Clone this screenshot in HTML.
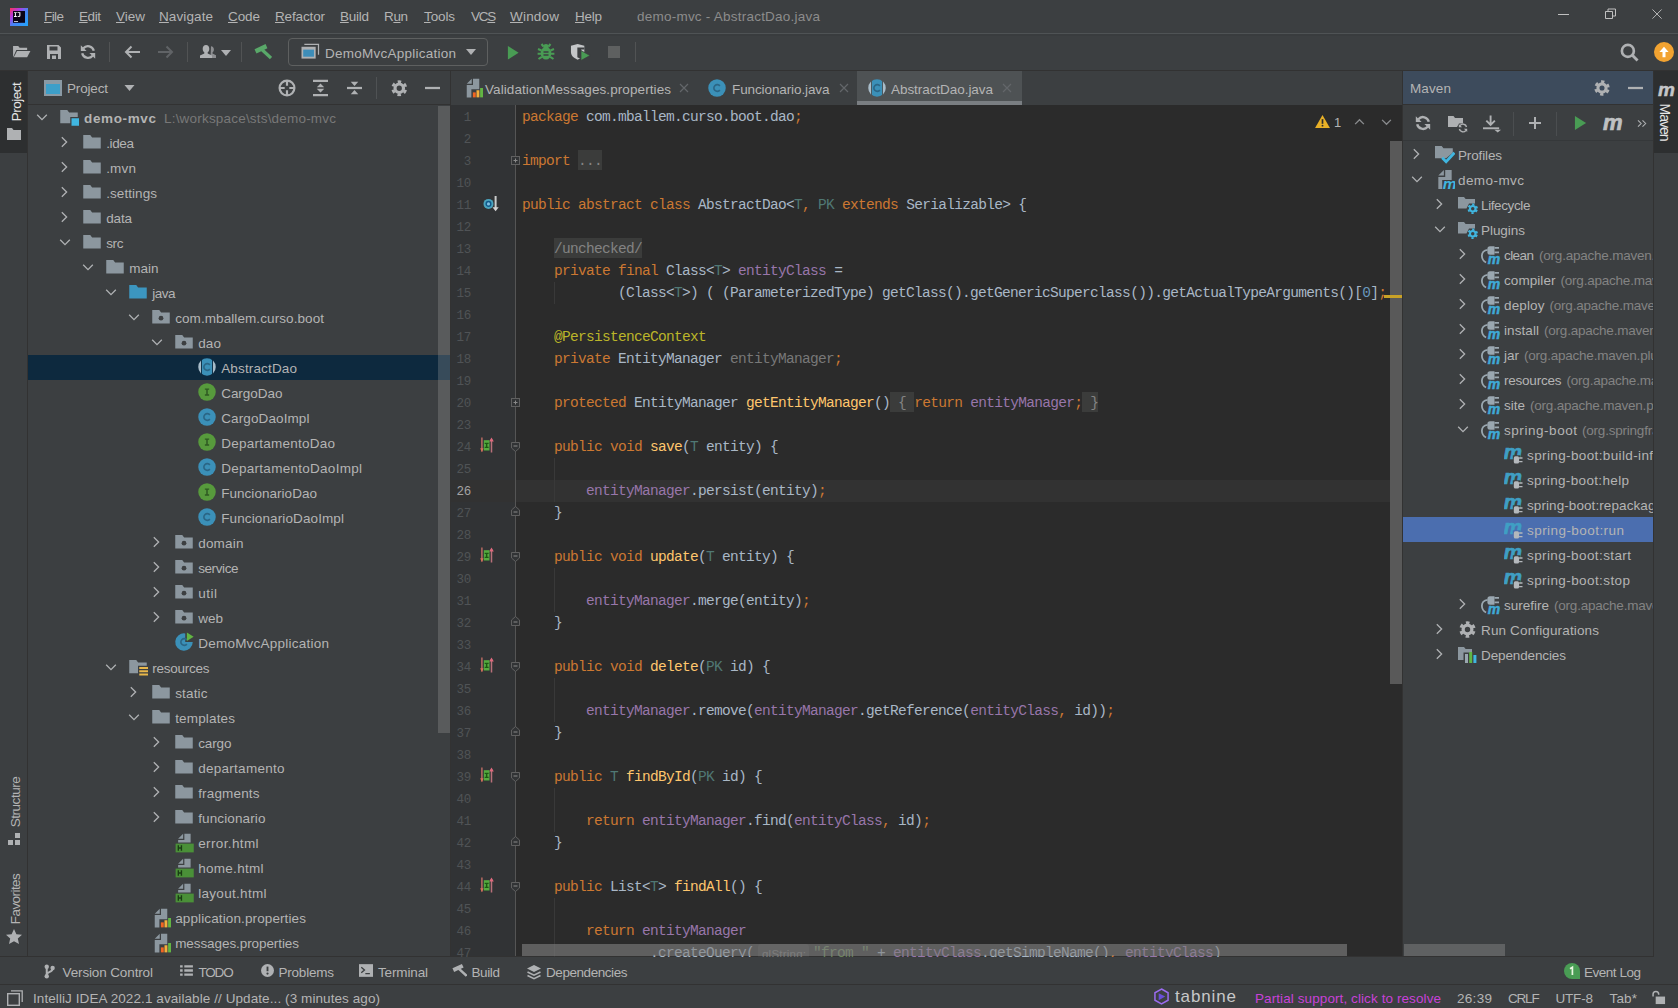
<!DOCTYPE html>
<html><head><meta charset="utf-8"><title>demo-mvc - AbstractDao.java</title>
<style>
html,body{margin:0;padding:0;background:#3c3f41;}
html{width:1678px;height:1008px;overflow:hidden;}
body{width:1678px;height:1008px;position:relative;overflow:hidden;font-family:"Liberation Sans",sans-serif;font-size:13.500px;color:#b4b4b4;}
#r{position:absolute;left:0;top:0;width:1678px;height:1008px;overflow:hidden;contain:strict;}
#r>div,#r>span,#r>svg,#r>pre{position:absolute;margin:0;}
#r>span{white-space:pre;}
pre{font-family:"Liberation Mono",monospace;font-size:14.500px;letter-spacing:-0.700px;color:#a9b7c6;height:22px;line-height:22px;white-space:pre;}
.k{color:#cc7832}.m{color:#ffc66d}.f{color:#9876aa}.a{color:#bbb529}.t{color:#507874}.n{color:#6897bb}.s{color:#6a8759}.g{color:#787878}
.fb{background:#3b3c3b;color:#838383;padding:3px 0 1px 0;}
.ln{font-size:12.500px;letter-spacing:-0.100px;color:#505356;}
.hint{background:#3b3b3b;color:#787878;font-family:"Liberation Sans";font-size:11.500px;letter-spacing:0;border-radius:3px;padding:1px 3px;}
u{text-decoration:underline;text-underline-offset:0.500px;text-decoration-thickness:1px;}
</style></head><body>
<svg width="0" height="0" style="position:absolute"><defs>

<symbol id="fold" viewBox="0 0 16 16"><path d="M1 13.2V2.4h5.6l1.5 2H15v8.8z" fill="#9aa7b0" opacity=".85"/></symbol>
<symbol id="fsrc" viewBox="0 0 16 16"><path d="M1 13.2V2.4h5.6l1.5 2H15v8.8z" fill="#3c96c0"/></symbol>
<symbol id="fpkg" viewBox="0 0 16 16"><path d="M1 13.2V2.4h5.6l1.5 2H15v8.8z" fill="#9aa7b0" opacity=".85"/><circle cx="8" cy="8.9" r="1.9" fill="#3c3f41"/></symbol>
<symbol id="fres" viewBox="0 0 16 16"><path d="M1 13V2.4h5.6l1.5 2H15V7H8v6z" fill="#9aa7b0" opacity=".85"/><path d="M9 8h7v1.6H9zM9 10.6h7v1.6H9zM9 13.2h7v1.6H9z" fill="#e8b74a"/></symbol>
<symbol id="fmod" viewBox="0 0 16 16"><path d="M1 13V2.4h5.6l1.5 2H15V8H9v5z" fill="#9aa7b0" opacity=".85"/><rect x="10" y="9" width="6" height="6" fill="#40b6e0"/></symbol>
<symbol id="cls" viewBox="0 0 16 16"><circle cx="8" cy="8" r="7" fill="#3b90b8"/><path d="M10.300 9.700A2.700 2.700 0 1 1 10.300 6.300" fill="none" stroke="#2b6686" stroke-width="1.300"/></symbol>
<symbol id="acls" viewBox="0 0 16 16"><clipPath id="cpm"><rect x="3.900" y="0" width="8.200" height="16"/></clipPath><clipPath id="cps"><path d="M0 0h3.200v16H0zM12.800 0H16v16h-3.200z"/></clipPath><circle cx="8" cy="8" r="7" fill="#3b90b8" clip-path="url(#cpm)"/><circle cx="8" cy="8" r="7" fill="#a8bcc9" clip-path="url(#cps)"/><path d="M10.300 9.700A2.700 2.700 0 1 1 10.300 6.300" fill="none" stroke="#2b6686" stroke-width="1.300"/></symbol>
<symbol id="intf" viewBox="0 0 16 16"><circle cx="8" cy="8" r="7" fill="#579a3c"/><path d="M6.300 5.100h3.400v1.100H8.600v3.600h1.100v1.100H6.300V9.800h1.100V6.200H6.300z" fill="#2f5a22"/></symbol>
<symbol id="app" viewBox="0 0 16 16"><path d="M9 1.100A7 7 0 1 0 15 8H9z" fill="#3b90b8"/><path d="M10.300 9.700A2.700 2.700 0 1 1 10.300 6.300" fill="none" stroke="#2b6686" stroke-width="1.300"/><path d="M10.300.300l5.400 3.400-5.400 3.500z" fill="#62b543"/></symbol>
<symbol id="html" viewBox="0 0 16 16"><path d="M7.300 .5L3.300 4.500h4z" fill="#9aa7b0" opacity=".85"/><path d="M8.300 .5v5h-5v2h10V.5z" fill="#9aa7b0" opacity=".85"/><rect x="1.300" y="8.500" width="14.500" height="7" fill="#4a9038"/><path d="M2.900 9.800h1.100v1.600h1.400V9.800h1.100v4.400H5.400v-1.700H4v1.700H2.900z" fill="#1a3d14"/></symbol>
<symbol id="prop" viewBox="0 0 16 16"><path d="M7 .5L3 4.500h4z" fill="#9aa7b0" opacity=".85"/><path d="M8 .5v5H3v10h3.700V9H13V.5z" fill="#9aa7b0" opacity=".85"/><rect x="7.900" y="11.500" width="2.300" height="4" fill="#f26522"/><rect x="10.800" y="9.800" width="2.300" height="5.700" fill="#f4af3d"/><rect x="13.700" y="8" width="2.300" height="7.500" fill="#62b543"/></symbol>
<symbol id="chr" viewBox="0 0 16 16"><path d="M5.500 2.500L11 8l-5.500 5.500" fill="none" stroke="#afb1b3" stroke-width="1.500"/></symbol>
<symbol id="chd" viewBox="0 0 16 16"><path d="M2.500 5.500L8 11l5.500-5.500" fill="none" stroke="#afb1b3" stroke-width="1.500"/></symbol>

<symbol id="logo" viewBox="0 0 18 18"><defs><linearGradient id="lg1" x1="0" y1="0" x2="1" y2="1"><stop offset="0" stop-color="#ff3355"/><stop offset=".28" stop-color="#b53be0"/><stop offset=".52" stop-color="#4a82f6"/><stop offset="1" stop-color="#1fa6fb"/></linearGradient></defs><rect width="18" height="18" fill="url(#lg1)"/><rect x="3" y="3" width="12" height="11.800" fill="#0a0418"/><path d="M4 4.200h2.800v.9H5.900v3h.9V9H4v-.9h.9v-3H4zM7.500 4.200h2.900v3.500q0 1.400-1.500 1.400-.9 0-1.500-.6l.6-.7q.4.400.8.400.5 0 .5-.5V5.100H7.500zM4 12.900h4v.9H4z" fill="#fff"/></symbol>

<symbol id="open" viewBox="0 0 20 16"><path d="M1 14V2h5.500l1.500 2H16v2.500H4.500L1 14z" fill="#afb1b3"/><path d="M5.200 7.500H19.500L16 14H1.800z" fill="#afb1b3"/></symbol>
<symbol id="save" viewBox="0 0 16 16"><path d="M1 1h11.500L15 3.500V15H1zM3.500 2.500v4h8v-4zM4 10v5h2V11.500h4V15h2v-5z" fill="#afb1b3" fill-rule="evenodd"/></symbol>
<symbol id="sync" viewBox="0 0 16 16"><path d="M13.800 6.800A6 6 0 0 0 3.400 4.200" fill="none" stroke="#afb1b3" stroke-width="2.300"/><path d="M.8 1.200v5.800h5.800z" fill="#afb1b3"/><path d="M2.200 9.200a6 6 0 0 0 10.400 2.600" fill="none" stroke="#afb1b3" stroke-width="2.300"/><path d="M15.200 14.800V9H9.400z" fill="#afb1b3"/></symbol>
<symbol id="back" viewBox="0 0 18 16"><path d="M17 8H3M8.500 2.500L3 8l5.500 5.500" fill="none" stroke="#afb1b3" stroke-width="2"/></symbol>
<symbol id="fwd" viewBox="0 0 18 16"><path d="M1 8h14M9.500 2.500L15 8l-5.500 5.500" fill="none" stroke="#606366" stroke-width="2"/></symbol>
<symbol id="user" viewBox="0 0 18 16"><path d="M12 2.200c1.800 0 2.900 1.300 2.900 3.200 0 1.400-.6 2.500-1.400 3.200v.9l3.500 1.700V14h-5.500" fill="#afb1b3" opacity=".7"/><path d="M7 1c2 0 3.300 1.500 3.300 3.700 0 1.600-.7 2.900-1.600 3.600v1.200l4.300 2V14H1v-2.500l4.300-2V8.300C4.400 7.600 3.700 6.300 3.700 4.700 3.700 2.500 5 1 7 1z" fill="#afb1b3"/></symbol>
<symbol id="dd" viewBox="0 0 10 6"><path d="M0 0h10L5 6z" fill="#afb1b3"/></symbol>
<symbol id="hammer" viewBox="0 0 18 18"><path d="M1.500 8.300L12.500 3.200" stroke="#59a869" stroke-width="4.600" fill="none"/><path d="M7.800 6.500L17 15" stroke="#59a869" stroke-width="3.200" fill="none"/></symbol>
<symbol id="appcfg" viewBox="0 0 20 18"><path d="M4 1.500h15v11" fill="none" stroke="#afb1b3" stroke-width="1.300"/><rect x="1" y="4" width="15" height="12.500" fill="#afb1b3"/><rect x="2.800" y="7" width="11.400" height="7.500" fill="#3d8db8"/></symbol>
<symbol id="run" viewBox="0 0 14 16" preserveAspectRatio="none"><path d="M1 1l12 7-12 7z" fill="#499c54"/></symbol>
<symbol id="debug" viewBox="0 0 18 18"><ellipse cx="9" cy="10.300" rx="5.300" ry="6.300" fill="#499c54"/><circle cx="9" cy="3.800" r="2.700" fill="#499c54"/><path d="M6.500 3.500L4.500 1M11.500 3.500l2-2.500M4.500 7.500L1 6M13.500 7.500L17 6M4 10.800H.6M14 10.800h3.400M4.800 13.800L1.500 16M13.200 13.800l3.300 2.200" stroke="#499c54" stroke-width="2.100" fill="none"/><path d="M6.500 8.300h5v1.500h-5zM6.500 11.300h5v1.500h-5z" fill="#3c3f41"/></symbol>
<symbol id="cover" viewBox="0 0 22 18"><path d="M1 2.500L8 .5l7 2V9c0 4-3 6.500-7 8-4-1.500-7-4-7-8z" fill="#c4c6c8"/><path d="M7.700 4.300H15v2.200h-3.300v6H15l-4 3.500-3.300-1.500z" fill="#3c3f41"/><path d="M11.500 7.500l9.500 5.200-9.500 5.300z" fill="#499c54" stroke="#3c3f41" stroke-width=".8"/></symbol>
<symbol id="stop" viewBox="0 0 14 14"><rect x="0" y="0" width="14" height="14" fill="#5e6060"/></symbol>
<symbol id="search" viewBox="0 0 20 20"><circle cx="8.300" cy="8.300" r="6.300" fill="none" stroke="#afb1b3" stroke-width="2.800"/><path d="M13 13L18.500 18.500" stroke="#afb1b3" stroke-width="3"/></symbol>
<symbol id="upd" viewBox="0 0 20 20"><circle cx="10" cy="10" r="10" fill="#f2a331"/><path d="M10 4.800l4.600 5.200h-3.100v5.200h-3V10H5.400z" fill="#fff"/></symbol>

<symbol id="projicon" viewBox="0 0 18 16"><rect x="0" y="0" width="18" height="16" fill="#8a9aa5"/><rect x="2" y="4" width="14" height="10" fill="#3d9fc9"/></symbol>
<symbol id="locate" viewBox="0 0 18 18"><circle cx="9" cy="9" r="7.400" fill="none" stroke="#afb1b3" stroke-width="2.200"/><path d="M9 1.500v5.200M9 11.300v5.200M1.500 9h5.200M11.300 9h5.200" stroke="#afb1b3" stroke-width="2.200"/></symbol>
<symbol id="expand" viewBox="0 0 16 18"><path d="M0 1.500h16M0 16.500h16" stroke="#afb1b3" stroke-width="2.400"/><path d="M8 4.200l4 4H4zM8 13.800l4-4H4z" fill="#afb1b3"/></symbol>
<symbol id="collapse" viewBox="0 0 16 18"><path d="M0 9h16" stroke="#afb1b3" stroke-width="2.400"/><path d="M8 6.800L4 2.300h8zM8 11.200l4 4.500H4z" fill="#afb1b3"/></symbol>
<symbol id="gear" viewBox="0 0 16 16"><circle cx="8" cy="8" r="4.100" fill="none" stroke="#afb1b3" stroke-width="3.100"/><circle cx="8" cy="8" r="6.400" fill="none" stroke="#afb1b3" stroke-width="2.600" stroke-dasharray="3.351 3.351" stroke-dashoffset="-1.675"/></symbol>
<symbol id="minus" viewBox="0 0 16 4"><rect width="16" height="2.400" y=".8" fill="#afb1b3"/></symbol>
<symbol id="xclose" viewBox="0 0 10 10"><path d="M1 1l8 8M9 1L1 9" stroke="#63666a" stroke-width="1.200"/></symbol>

<symbol id="mreimp" viewBox="0 0 16 16"><path d="M13.800 6.800A6 6 0 0 0 3.400 4.200" fill="none" stroke="#afb1b3" stroke-width="2.400"/><path d="M.8 1.200v5.800h5.800z" fill="#afb1b3"/><path d="M2.200 9.200a6 6 0 0 0 10.400 2.600" fill="none" stroke="#afb1b3" stroke-width="2.400"/><path d="M15.200 14.800V9H9.400z" fill="#afb1b3"/></symbol>
<symbol id="mgen" viewBox="0 0 20 18"><path d="M0 12V1h5.500l1.500 2H15v5.500h-4l-2 3.500z" fill="#afb1b3"/><path d="M18.500 12a3.600 3.600 0 0 0-6.500-1.300" fill="none" stroke="#afb1b3" stroke-width="1.400"/><path d="M10.800 9v3.300h3.300z" fill="#afb1b3"/><path d="M11.400 14a3.600 3.600 0 0 0 6.500 1.300" fill="none" stroke="#afb1b3" stroke-width="1.400"/><path d="M19.200 17v-3.300h-3.300z" fill="#afb1b3"/></symbol>
<symbol id="mdown" viewBox="0 0 20 18"><path d="M8 0v9M3.500 5.500L8 10l4.500-4.500" fill="none" stroke="#afb1b3" stroke-width="2"/><path d="M0 13.500h17" stroke="#afb1b3" stroke-width="2"/><path d="M12 15h7l-3.500 3z" fill="#afb1b3"/></symbol>
<symbol id="plus" viewBox="0 0 12 12"><path d="M6 0v12M0 6h12" stroke="#afb1b3" stroke-width="2"/></symbol>
<symbol id="more" viewBox="0 0 10 8" preserveAspectRatio="none"><path d="M1 .5L4.200 4 1 7.500M5.500 .5L8.700 4 5.500 7.500" fill="none" stroke="#afb1b3" stroke-width="1.100"/></symbol>

<symbol id="mprof" viewBox="0 0 18 18"><path d="M0 12V1h6l1.600 2H16v4l-6 5z" fill="#9aa7b0" opacity=".85"/><path d="M6.500 11.500L10 15l7.500-8" fill="none" stroke="#40b6e0" stroke-width="2.600"/></symbol>
<symbol id="mproj" viewBox="0 0 18 18"><path d="M8 0L3 5h5z" fill="#9aa7b0" opacity=".85"/><path d="M9.200 0v6.200H3V17h3.500V9H15V0z" fill="#9aa7b0" opacity=".85"/><text x="7" y="17.500" font-family="Liberation Sans" font-style="italic" font-weight="bold" font-size="14" fill="#40b6e0">m</text></symbol>
<symbol id="mphase" viewBox="0 0 20 18"><path d="M0 12.500V1h6l1.600 2H17v4.500h-6l-2.500 5z" fill="#9aa7b0" opacity=".85"/><g transform="translate(9.300 7.300) scale(.68)"><circle cx="8" cy="8" r="4.100" fill="none" stroke="#40b6e0" stroke-width="3.100"/><circle cx="8" cy="8" r="6.400" fill="none" stroke="#40b6e0" stroke-width="2.600" stroke-dasharray="3.351 3.351" stroke-dashoffset="-1.675"/></g></symbol>
<symbol id="mplug" viewBox="0 0 20 20"><path d="M6.600 4.800C2.800 5.200.8 8 .9 11c.1 3 1.700 5.300 4.200 6.500" fill="none" stroke="#9aa7b0" stroke-width="1.800"/><path d="M6.400 3.800Q6.400 1.300 9 1.300h4.500v8.400H9Q6.400 9.700 6.400 7.200z" fill="#9aa7b0"/><path d="M13.500 2.800H18M13.500 7.300H18" stroke="#9aa7b0" stroke-width="1.700"/><text x="6.800" y="19.400" font-family="Liberation Sans" font-style="italic" font-weight="bold" font-size="14" fill="#3fa9d6" stroke="#3fa9d6" stroke-width=".5">m</text></symbol>
<symbol id="mgoal" viewBox="0 0 20 20"><text x="-.3" y="13.500" font-family="Liberation Sans" font-style="italic" font-weight="bold" font-size="20.500" fill="#3f9fc4" stroke="#3f9fc4" stroke-width=".7">m</text><rect x="8.800" y="10.300" width="7.500" height="9.200" style="fill:var(--bg,#3c3f41)"/><rect x="9.800" y="11.300" width="5.300" height="7.200" rx="1.600" fill="#b4b8bc"/><path d="M15.100 13h3.400M15.100 16.600h3.400" stroke="#b4b8bc" stroke-width="1.300"/></symbol>
<symbol id="mdeps" viewBox="0 0 20 18"><path d="M0 14V1h6l1.600 2H14v3.500H5.500V14z" fill="#9aa7b0" opacity=".85"/><rect x="7" y="8" width="3" height="9" fill="#9aa7b0"/><rect x="11.200" y="6" width="3" height="11" fill="#62b543"/><rect x="15.400" y="9" width="3" height="8" fill="#40b6e0"/></symbol>

<symbol id="vcs" viewBox="0 0 12 16"><circle cx="3" cy="2.800" r="2.400" fill="#afb1b3"/><circle cx="3" cy="13.200" r="2.400" fill="#afb1b3"/><circle cx="9.400" cy="4.200" r="2.400" fill="#afb1b3"/><path d="M3 3v10M9.400 5c0 4-6.400 3-6.400 7" fill="none" stroke="#afb1b3" stroke-width="2.200"/></symbol>
<symbol id="todo" viewBox="0 0 14 12"><path d="M0 1.500h2.800M4.600 1.500H14M0 6h2.800M4.600 6H14M0 10.500h2.800M4.600 10.500H14" stroke="#afb1b3" stroke-width="2.700"/></symbol>
<symbol id="probs" viewBox="0 0 14 14"><circle cx="7" cy="7" r="7" fill="#afb1b3"/><path d="M7 2.800v5" stroke="#3c3f41" stroke-width="2"/><circle cx="7" cy="10.300" r="1.200" fill="#3c3f41"/></symbol>
<symbol id="term" viewBox="0 0 16 14"><rect width="16" height="14" fill="#afb1b3"/><path d="M2.500 3.500L6 6.500 2.500 9.500M7 10.500h5" fill="none" stroke="#3c3f41" stroke-width="1.500"/></symbol>
<symbol id="bhammer" viewBox="0 0 18 18"><path d="M1.500 8.300L12.500 3.200" stroke="#afb1b3" stroke-width="4.600" fill="none"/><path d="M7.800 6.500L17 15" stroke="#afb1b3" stroke-width="3" fill="none"/></symbol>
<symbol id="deps" viewBox="0 0 16 16"><path d="M8 1l7 3.500L8 8 1 4.500z" fill="#afb1b3"/><path d="M1.500 8L8 11.200 14.500 8M1.500 11.500L8 14.700l6.500-3.200" fill="none" stroke="#afb1b3" stroke-width="1.600"/></symbol>
<symbol id="evlog" viewBox="0 0 16 16"><path d="M8 0a8 8 0 0 1 8 8v8H8A8 8 0 0 1 8 0z" fill="#499c54"/><path d="M6 5.800l2.400-1.500V12" fill="none" stroke="#e8f5e0" stroke-width="1.700"/></symbol>
<symbol id="sq" viewBox="0 0 16 16"><path d="M4 .800h11.200V12" fill="none" stroke="#afb1b3" stroke-width="1.300"/><rect x=".700" y="3.700" width="11.600" height="11.600" fill="none" stroke="#afb1b3" stroke-width="1.400"/></symbol>
<symbol id="lock" viewBox="0 0 16 16"><path d="M2.200 7V4.500a3 3 0 0 1 6 0V5" fill="none" stroke="#afb1b3" stroke-width="1.600"/><rect x="5" y="7" width="10" height="8" fill="#afb1b3"/></symbol>
<symbol id="tabn" viewBox="0 0 16 18"><path d="M8 1l7 4v8l-7 4-7-4V5z" fill="none" stroke="#9b6cf0" stroke-width="1.600"/><path d="M5 5.500l7 3.500-7 4z" fill="#6a4fd8"/></symbol>

<symbol id="gimpl" viewBox="0 0 16 16"><circle cx="5.500" cy="7.900" r="5" fill="#4aa3bd"/><circle cx="5.500" cy="7.900" r="2.300" fill="#7fc0e2" stroke="#0f5a8c" stroke-width="1.500"/><path d="M12.600 0v12" stroke="#c9cccb" stroke-width="2" fill="none"/><path d="M9.500 11.200h6.200l-3.100 4z" fill="#d4d4d4"/></symbol>
<symbol id="gover" viewBox="0 0 14 16"><path d="M1.900 .5v14" stroke="#b86a62" stroke-width="1.500" fill="none"/><path d="M.2 11.300h3.400L1.900 15.300z" fill="#d4705a"/><path d="M11.500 15.500V2" stroke="#b8707a" stroke-width="1.500" fill="none"/><path d="M9.200 4.600h4.600L11.500 .6z" fill="#de6a7e"/><rect x="3.800" y="3.200" width="5.700" height="10.300" fill="#55ab40"/><path d="M4.700 5.800h3.900v1.300H4.700zM4.700 9.800h3.900v1.300H4.700zM5.900 7h1.500v3H5.900z" fill="#1c5a12"/></symbol>
<symbol id="fplus" viewBox="0 0 9 9"><rect x=".5" y=".5" width="8" height="8" fill="#313335" stroke="#606060" stroke-width="1"/><path d="M2.500 4.500h4M4.500 2.500v4" stroke="#8a8a8a" stroke-width="1"/></symbol>
<symbol id="fstart" viewBox="0 0 9 10"><path d="M.5 .5h8v5.500L4.500 9.500.5 6z" fill="#313335" stroke="#606060" stroke-width="1"/><path d="M2.500 4h4" stroke="#8a8a8a" stroke-width="1"/></symbol>
<symbol id="fend" viewBox="0 0 9 10"><path d="M.5 9.500h8V4L4.500 .5.5 4z" fill="#313335" stroke="#606060" stroke-width="1"/><path d="M2.500 6h4" stroke="#8a8a8a" stroke-width="1"/></symbol>
<symbol id="warn" viewBox="0 0 16 14"><path d="M8 0l8 14H0z" fill="#e8b027"/><path d="M8 4.500v5" stroke="#2b2b2b" stroke-width="1.800"/><circle cx="8" cy="11.500" r="1" fill="#2b2b2b"/></symbol>
<symbol id="cup" viewBox="0 0 12 8"><path d="M1 7l5-5 5 5" fill="none" stroke="#8a8c8e" stroke-width="1.500"/></symbol>
<symbol id="cdn" viewBox="0 0 12 8"><path d="M1 1l5 5 5-5" fill="none" stroke="#8a8c8e" stroke-width="1.500"/></symbol>
<symbol id="sfold" viewBox="0 0 14 12"><path d="M0 12V0h5l1.500 2H14v10z" fill="#afb1b3"/></symbol>
<symbol id="struct" viewBox="0 0 12 12"><rect x="0" y="7" width="5" height="5" fill="#afb1b3"/><rect x="7" y="7" width="5" height="5" fill="#afb1b3"/><rect x="7" y="0" width="5" height="5" fill="#afb1b3"/></symbol>
<symbol id="star" viewBox="0 0 16 15"><path d="M8 0l2.400 5.200 5.600.6-4.200 3.800 1.200 5.400L8 12.200 3 15l1.200-5.400L0 5.800l5.600-.6z" fill="#afb1b3"/></symbol>
<symbol id="winmin" viewBox="0 0 12 12"><path d="M0 6.500h11" stroke="#c0c0c0" stroke-width="1"/></symbol>
<symbol id="winmax" viewBox="0 0 12 12"><path d="M.5 3.500h7v7h-7z M3 3.500V1h7.500v7H8" fill="none" stroke="#c0c0c0" stroke-width="1"/></symbol>
<symbol id="wincl" viewBox="0 0 12 12"><path d="M.5 .5l10 10M10.500 .5l-10 10" stroke="#c0c0c0" stroke-width="1"/></symbol>

</defs></svg>
<div id="r">
<div style="left:0px;top:33px;width:1678px;height:1px;background:#4f5355;"></div>
<div style="left:0px;top:34px;width:1678px;height:2px;background:#393c3e;"></div>
<div style="left:0px;top:70px;width:1678px;height:1px;background:#323232;"></div>
<div style="left:27px;top:71px;width:1px;height:886px;background:#323232;"></div>
<div style="left:0px;top:71px;width:27px;height:82px;background:#2d2f30;"></div>
<div style="left:1653px;top:71px;width:1px;height:886px;background:#323232;"></div>
<div style="left:1654px;top:71px;width:24px;height:82px;background:#2d2f30;"></div>
<div style="left:28px;top:104px;width:422px;height:1px;background:#323232;"></div>
<div style="left:450px;top:71px;width:1px;height:886px;background:#323232;"></div>
<div style="left:451px;top:105px;width:65px;height:852px;background:#313335;"></div>
<div style="left:516px;top:105px;width:886px;height:852px;background:#2b2b2b;"></div>
<div style="left:515px;top:105px;width:1px;height:852px;background:#555555;"></div>
<div style="left:516px;top:480px;width:874px;height:22px;background:#323232;"></div>
<div style="left:451px;top:480px;width:64px;height:22px;background:#323232;"></div>
<div style="left:1402px;top:71px;width:1px;height:886px;background:#323232;"></div>
<div style="left:1403px;top:71px;width:250px;height:33px;background:#3d4b5c;"></div>
<div style="left:1403px;top:104px;width:250px;height:1px;background:#323232;"></div>
<div style="left:1403px;top:140px;width:250px;height:1px;background:#35383a;"></div>
<div style="left:1403px;top:517px;width:250px;height:25px;background:#4b6eaf;"></div>
<div style="left:0px;top:956px;width:1678px;height:1px;background:#323232;"></div>
<div style="left:0px;top:984px;width:1678px;height:1px;background:#323232;"></div>
<svg style="left:10px;top:8px;" width="18" height="18"><use href="#logo"/></svg>
<span style="left:44px;top:5.00px;height:24px;line-height:24px;color:#b4b4b4;letter-spacing:-0.589px;"><u>F</u>ile</span>
<span style="left:79px;top:5.00px;height:24px;line-height:24px;color:#b4b4b4;letter-spacing:-0.422px;"><u>E</u>dit</span>
<span style="left:116px;top:5.00px;height:24px;line-height:24px;color:#b4b4b4;letter-spacing:-0.010px;"><u>V</u>iew</span>
<span style="left:159px;top:5.00px;height:24px;line-height:24px;color:#b4b4b4;letter-spacing:0.100px;"><u>N</u>avigate</span>
<span style="left:228px;top:5.00px;height:24px;line-height:24px;color:#b4b4b4;letter-spacing:-0.094px;"><u>C</u>ode</span>
<span style="left:275px;top:5.00px;height:24px;line-height:24px;color:#b4b4b4;letter-spacing:-0.147px;"><u>R</u>efactor</span>
<span style="left:340px;top:5.00px;height:24px;line-height:24px;color:#b4b4b4;letter-spacing:-0.258px;"><u>B</u>uild</span>
<span style="left:384px;top:5.00px;height:24px;line-height:24px;color:#b4b4b4;letter-spacing:-0.383px;">R<u>u</u>n</span>
<span style="left:424px;top:5.00px;height:24px;line-height:24px;color:#b4b4b4;letter-spacing:-0.129px;"><u>T</u>ools</span>
<span style="left:471px;top:5.00px;height:24px;line-height:24px;color:#b4b4b4;letter-spacing:-1.200px;">VC<u>S</u></span>
<span style="left:510px;top:5.00px;height:24px;line-height:24px;color:#b4b4b4;letter-spacing:0.197px;"><u>W</u>indow</span>
<span style="left:575px;top:5.00px;height:24px;line-height:24px;color:#b4b4b4;letter-spacing:-0.255px;"><u>H</u>elp</span>
<span style="left:637px;top:5.00px;height:24px;line-height:24px;color:#8c8c8c;letter-spacing:0.228px;">demo-mvc - AbstractDao.java</span>
<svg style="left:1558px;top:8px;" width="12" height="12"><use href="#winmin"/></svg>
<svg style="left:1604.5px;top:8px;" width="12" height="12"><use href="#winmax"/></svg>
<svg style="left:1651.5px;top:8.5px;" width="11" height="11"><use href="#wincl"/></svg>
<svg style="left:12px;top:44px;" width="19" height="15"><use href="#open"/></svg>
<svg style="left:46px;top:44px;" width="16" height="16"><use href="#save"/></svg>
<svg style="left:80px;top:44px;" width="16" height="16"><use href="#sync"/></svg>
<div style="left:109px;top:42px;width:1px;height:20px;background:#515354;"></div>
<svg style="left:123px;top:44px;" width="18" height="16"><use href="#back"/></svg>
<svg style="left:157px;top:44px;" width="18" height="16"><use href="#fwd"/></svg>
<div style="left:187px;top:42px;width:1px;height:20px;background:#515354;"></div>
<svg style="left:199px;top:44px;" width="18" height="16"><use href="#user"/></svg>
<svg style="left:221px;top:50px;" width="10" height="6"><use href="#dd"/></svg>
<div style="left:241px;top:42px;width:1px;height:20px;background:#515354;"></div>
<svg style="left:254px;top:43px;" width="18" height="18"><use href="#hammer"/></svg>
<div style="left:288px;top:38px;width:198px;height:26px;border:1px solid #5e6060;border-radius:4px;"></div>
<svg style="left:300px;top:43px;" width="20" height="17"><use href="#appcfg"/></svg>
<span style="left:325px;top:42.00px;height:24px;line-height:24px;color:#b4b4b4;letter-spacing:0.246px;">DemoMvcApplication</span>
<svg style="left:466px;top:49px;" width="10" height="6"><use href="#dd"/></svg>
<svg style="left:506.5px;top:44.5px;" width="12.5" height="15.5"><use href="#run"/></svg>
<svg style="left:537px;top:43px;" width="18" height="18"><use href="#debug"/></svg>
<svg style="left:570px;top:43px;" width="21" height="18"><use href="#cover"/></svg>
<svg style="left:608px;top:46px;" width="12" height="12"><use href="#stop"/></svg>
<div style="left:635px;top:42px;width:1px;height:20px;background:#515354;"></div>
<svg style="left:1620px;top:43px;" width="19" height="19"><use href="#search"/></svg>
<svg style="left:1654px;top:42px;" width="20" height="20"><use href="#upd"/></svg>
<span style="left:-83.5px;top:91.5px;width:200px;height:20px;line-height:20px;text-align:center;color:#e6e6e6;font-size:13.5px;transform:rotate(-90deg);letter-spacing:-0.505px;">Project</span>
<svg style="left:7px;top:128px;" width="14" height="12"><use href="#sfold"/></svg>
<span style="left:-84px;top:791.5px;width:200px;height:20px;line-height:20px;text-align:center;color:#b4b4b4;font-size:13.5px;transform:rotate(-90deg);letter-spacing:-0.473px;">Structure</span>
<svg style="left:8px;top:833px;" width="12" height="12"><use href="#struct"/></svg>
<span style="left:-84px;top:888.5px;width:200px;height:20px;line-height:20px;text-align:center;color:#b4b4b4;font-size:13.5px;transform:rotate(-90deg);letter-spacing:-0.566px;">Favorites</span>
<svg style="left:6px;top:929px;" width="16" height="15"><use href="#star"/></svg>
<span style="left:1658px;top:79.00px;height:22px;line-height:22px;color:#c4c6c8;font-size:19px;-webkit-text-stroke:0.500px #c4c6c8;"><i><b>m</b></i></span>
<span style="left:1565px;top:112.0px;width:200px;height:20px;line-height:20px;text-align:center;color:#e6e6e6;font-size:14px;transform:rotate(90deg);letter-spacing:-1.008px;">Maven</span>
<svg style="left:44px;top:80px;" width="18" height="16"><use href="#projicon"/></svg>
<span style="left:67px;top:77.00px;height:24px;line-height:24px;color:#b4b4b4;letter-spacing:-0.172px;">Project</span>
<svg style="left:124px;top:85px;" width="11" height="6"><use href="#dd"/></svg>
<svg style="left:278px;top:79px;" width="18" height="18"><use href="#locate"/></svg>
<svg style="left:313px;top:79px;" width="15" height="18"><use href="#expand"/></svg>
<svg style="left:347px;top:79px;" width="15" height="18"><use href="#collapse"/></svg>
<div style="left:376px;top:77px;width:1px;height:22px;background:#4f5254;"></div>
<svg style="left:390.5px;top:80px;" width="16.5" height="16.5"><use href="#gear"/></svg>
<svg style="left:425px;top:86px;" width="15" height="4"><use href="#minus"/></svg>
<div style="left:28px;top:355px;width:422px;height:25px;background:#0d293e;"></div>
<svg style="left:35px;top:109.9px;" width="14" height="14"><use href="#chd"/></svg>
<svg style="left:59px;top:106.6px;" width="20" height="20"><use href="#fmod"/></svg>
<span style="left:84px;top:106.50px;height:24px;line-height:24px;color:#b4b4b4;font-weight:bold;letter-spacing:0.638px;">demo-mvc</span>
<span style="left:164px;top:106.50px;height:24px;line-height:24px;color:#787878;letter-spacing:0.195px;">L:\workspace\sts\demo-mvc</span>
<svg style="left:57.1px;top:135.1px;" width="14" height="14"><use href="#chr"/></svg>
<svg style="left:82px;top:131.6px;" width="20" height="20"><use href="#fold"/></svg>
<span style="left:106.2px;top:131.50px;height:24px;line-height:24px;color:#b4b4b4;letter-spacing:-0.370px;">.idea</span>
<svg style="left:57.1px;top:160.1px;" width="14" height="14"><use href="#chr"/></svg>
<svg style="left:82px;top:156.6px;" width="20" height="20"><use href="#fold"/></svg>
<span style="left:106.2px;top:156.50px;height:24px;line-height:24px;color:#b4b4b4;letter-spacing:0.178px;">.mvn</span>
<svg style="left:57.1px;top:185.1px;" width="14" height="14"><use href="#chr"/></svg>
<svg style="left:82px;top:181.6px;" width="20" height="20"><use href="#fold"/></svg>
<span style="left:106.2px;top:181.50px;height:24px;line-height:24px;color:#b4b4b4;letter-spacing:0.065px;">.settings</span>
<svg style="left:57.1px;top:210.1px;" width="14" height="14"><use href="#chr"/></svg>
<svg style="left:82px;top:206.6px;" width="20" height="20"><use href="#fold"/></svg>
<span style="left:106.2px;top:206.50px;height:24px;line-height:24px;color:#b4b4b4;letter-spacing:-0.160px;">data</span>
<svg style="left:58px;top:234.9px;" width="14" height="14"><use href="#chd"/></svg>
<svg style="left:82px;top:231.6px;" width="20" height="20"><use href="#fold"/></svg>
<span style="left:106.2px;top:231.50px;height:24px;line-height:24px;color:#b4b4b4;letter-spacing:-0.350px;">src</span>
<svg style="left:81px;top:259.9px;" width="14" height="14"><use href="#chd"/></svg>
<svg style="left:105px;top:256.6px;" width="20" height="20"><use href="#fold"/></svg>
<span style="left:129.2px;top:256.50px;height:24px;line-height:24px;color:#b4b4b4;letter-spacing:0.011px;">main</span>
<svg style="left:104px;top:284.9px;" width="14" height="14"><use href="#chd"/></svg>
<svg style="left:128px;top:281.6px;" width="20" height="20"><use href="#fsrc"/></svg>
<span style="left:152.2px;top:281.50px;height:24px;line-height:24px;color:#b4b4b4;letter-spacing:-0.489px;">java</span>
<svg style="left:127px;top:309.9px;" width="14" height="14"><use href="#chd"/></svg>
<svg style="left:151px;top:306.6px;" width="20" height="20"><use href="#fpkg"/></svg>
<span style="left:175.2px;top:306.50px;height:24px;line-height:24px;color:#b4b4b4;letter-spacing:0.083px;">com.mballem.curso.boot</span>
<svg style="left:150px;top:334.9px;" width="14" height="14"><use href="#chd"/></svg>
<svg style="left:174px;top:331.6px;" width="20" height="20"><use href="#fpkg"/></svg>
<span style="left:198.2px;top:331.50px;height:24px;line-height:24px;color:#b4b4b4;letter-spacing:0.134px;">dao</span>
<svg style="left:197px;top:357px;" width="20" height="20"><use href="#acls"/></svg>
<span style="left:221.2px;top:356.50px;height:24px;line-height:24px;color:#b4b4b4;letter-spacing:0.150px;">AbstractDao</span>
<svg style="left:197px;top:382px;" width="20" height="20"><use href="#intf"/></svg>
<span style="left:221.2px;top:381.50px;height:24px;line-height:24px;color:#b4b4b4;letter-spacing:-0.035px;">CargoDao</span>
<svg style="left:197px;top:407px;" width="20" height="20"><use href="#cls"/></svg>
<span style="left:221.2px;top:406.50px;height:24px;line-height:24px;color:#b4b4b4;letter-spacing:0.114px;">CargoDaoImpl</span>
<svg style="left:197px;top:432px;" width="20" height="20"><use href="#intf"/></svg>
<span style="left:221.2px;top:431.50px;height:24px;line-height:24px;color:#b4b4b4;letter-spacing:0.248px;">DepartamentoDao</span>
<svg style="left:197px;top:457px;" width="20" height="20"><use href="#cls"/></svg>
<span style="left:221.2px;top:456.50px;height:24px;line-height:24px;color:#b4b4b4;letter-spacing:0.276px;">DepartamentoDaoImpl</span>
<svg style="left:197px;top:482px;" width="20" height="20"><use href="#intf"/></svg>
<span style="left:221.2px;top:481.50px;height:24px;line-height:24px;color:#b4b4b4;letter-spacing:0.038px;">FuncionarioDao</span>
<svg style="left:197px;top:507px;" width="20" height="20"><use href="#cls"/></svg>
<span style="left:221.2px;top:506.50px;height:24px;line-height:24px;color:#b4b4b4;letter-spacing:0.117px;">FuncionarioDaoImpl</span>
<svg style="left:149.1px;top:535.1px;" width="14" height="14"><use href="#chr"/></svg>
<svg style="left:174px;top:531.6px;" width="20" height="20"><use href="#fpkg"/></svg>
<span style="left:198.2px;top:531.50px;height:24px;line-height:24px;color:#b4b4b4;letter-spacing:0.204px;">domain</span>
<svg style="left:149.1px;top:560.1px;" width="14" height="14"><use href="#chr"/></svg>
<svg style="left:174px;top:556.6px;" width="20" height="20"><use href="#fpkg"/></svg>
<span style="left:198.2px;top:556.50px;height:24px;line-height:24px;color:#b4b4b4;letter-spacing:-0.411px;">service</span>
<svg style="left:149.1px;top:585.1px;" width="14" height="14"><use href="#chr"/></svg>
<svg style="left:174px;top:581.6px;" width="20" height="20"><use href="#fpkg"/></svg>
<span style="left:198.2px;top:581.50px;height:24px;line-height:24px;color:#b4b4b4;letter-spacing:0.511px;">util</span>
<svg style="left:149.1px;top:610.1px;" width="14" height="14"><use href="#chr"/></svg>
<svg style="left:174px;top:606.6px;" width="20" height="20"><use href="#fpkg"/></svg>
<span style="left:198.2px;top:606.50px;height:24px;line-height:24px;color:#b4b4b4;letter-spacing:0.017px;">web</span>
<svg style="left:174px;top:632px;" width="20" height="20"><use href="#app"/></svg>
<span style="left:198.2px;top:631.50px;height:24px;line-height:24px;color:#b4b4b4;letter-spacing:0.235px;">DemoMvcApplication</span>
<svg style="left:104px;top:659.9px;" width="14" height="14"><use href="#chd"/></svg>
<svg style="left:128px;top:656.6px;" width="20" height="20"><use href="#fres"/></svg>
<span style="left:152.2px;top:656.50px;height:24px;line-height:24px;color:#b4b4b4;letter-spacing:-0.248px;">resources</span>
<svg style="left:126.1px;top:685.1px;" width="14" height="14"><use href="#chr"/></svg>
<svg style="left:151px;top:681.6px;" width="20" height="20"><use href="#fold"/></svg>
<span style="left:175.2px;top:681.50px;height:24px;line-height:24px;color:#b4b4b4;letter-spacing:0.157px;">static</span>
<svg style="left:127px;top:709.9px;" width="14" height="14"><use href="#chd"/></svg>
<svg style="left:151px;top:706.6px;" width="20" height="20"><use href="#fold"/></svg>
<span style="left:175.2px;top:706.50px;height:24px;line-height:24px;color:#b4b4b4;letter-spacing:0.159px;">templates</span>
<svg style="left:149.1px;top:735.1px;" width="14" height="14"><use href="#chr"/></svg>
<svg style="left:174px;top:731.6px;" width="20" height="20"><use href="#fold"/></svg>
<span style="left:198.2px;top:731.50px;height:24px;line-height:24px;color:#b4b4b4;letter-spacing:-0.120px;">cargo</span>
<svg style="left:149.1px;top:760.1px;" width="14" height="14"><use href="#chr"/></svg>
<svg style="left:174px;top:756.6px;" width="20" height="20"><use href="#fold"/></svg>
<span style="left:198.2px;top:756.50px;height:24px;line-height:24px;color:#b4b4b4;letter-spacing:0.272px;">departamento</span>
<svg style="left:149.1px;top:785.1px;" width="14" height="14"><use href="#chr"/></svg>
<svg style="left:174px;top:781.6px;" width="20" height="20"><use href="#fold"/></svg>
<span style="left:198.2px;top:781.50px;height:24px;line-height:24px;color:#b4b4b4;letter-spacing:0.159px;">fragments</span>
<svg style="left:149.1px;top:810.1px;" width="14" height="14"><use href="#chr"/></svg>
<svg style="left:174px;top:806.6px;" width="20" height="20"><use href="#fold"/></svg>
<span style="left:198.2px;top:806.50px;height:24px;line-height:24px;color:#b4b4b4;letter-spacing:0.125px;">funcionario</span>
<svg style="left:174px;top:832.5px;" width="20" height="20"><use href="#html"/></svg>
<span style="left:198.2px;top:831.50px;height:24px;line-height:24px;color:#b4b4b4;letter-spacing:0.365px;">error.html</span>
<svg style="left:174px;top:857.5px;" width="20" height="20"><use href="#html"/></svg>
<span style="left:198.2px;top:856.50px;height:24px;line-height:24px;color:#b4b4b4;letter-spacing:0.284px;">home.html</span>
<svg style="left:174px;top:882.5px;" width="20" height="20"><use href="#html"/></svg>
<span style="left:198.2px;top:881.50px;height:24px;line-height:24px;color:#b4b4b4;letter-spacing:0.302px;">layout.html</span>
<svg style="left:151.4px;top:907.5px;" width="20" height="20"><use href="#prop"/></svg>
<span style="left:175.2px;top:906.50px;height:24px;line-height:24px;color:#b4b4b4;letter-spacing:0.117px;">application.properties</span>
<svg style="left:151.4px;top:932.5px;" width="20" height="20"><use href="#prop"/></svg>
<span style="left:175.2px;top:931.50px;height:24px;line-height:24px;color:#b4b4b4;letter-spacing:-0.084px;">messages.properties</span>
<div style="left:438px;top:106px;width:11.5px;height:627px;background:rgba(166,166,166,0.28);"></div>
<div style="left:28px;top:957px;width:423px;height:27px;background:#3c3f41;"></div>
<svg style="left:463px;top:78px;" width="20" height="20"><use href="#prop"/></svg>
<span style="left:485px;top:78.00px;height:24px;line-height:24px;color:#b4b4b4;letter-spacing:0.085px;">ValidationMessages.properties</span>
<svg style="left:679px;top:83px;" width="10" height="10"><use href="#xclose"/></svg>
<svg style="left:707px;top:78px;" width="20" height="20"><use href="#cls"/></svg>
<span style="left:732px;top:78.00px;height:24px;line-height:24px;color:#b4b4b4;letter-spacing:-0.104px;">Funcionario.java</span>
<svg style="left:839px;top:83px;" width="10" height="10"><use href="#xclose"/></svg>
<div style="left:857px;top:71px;width:165px;height:34px;background:#4e5254;"></div>
<div style="left:857px;top:101px;width:165px;height:4px;background:#7a7e82;"></div>
<svg style="left:867px;top:78px;" width="20" height="20"><use href="#acls"/></svg>
<span style="left:891px;top:78.00px;height:24px;line-height:24px;color:#b4b4b4;letter-spacing:-0.054px;">AbstractDao.java</span>
<svg style="left:1002px;top:83px;" width="10" height="10"><use href="#xclose"/></svg>
<pre class=ln style="left:451px;top:107.0px;width:20.200px;text-align:right;">1</pre>
<pre style="left:522px;top:105.8px;"><span class=k>package </span>com.mballem.curso.boot.dao<span class=k>;</span></pre>
<pre class=ln style="left:451px;top:129.0px;width:20.200px;text-align:right;">2</pre>
<pre class=ln style="left:451px;top:151.0px;width:20.200px;text-align:right;">3</pre>
<pre style="left:522px;top:149.8px;"><span class=k>import </span><span class=fb>...</span></pre>
<pre class=ln style="left:451px;top:173.0px;width:20.200px;text-align:right;">10</pre>
<pre class=ln style="left:451px;top:195.0px;width:20.200px;text-align:right;">11</pre>
<pre style="left:522px;top:193.8px;"><span class=k>public abstract class </span>AbstractDao&lt;<span class=t>T</span><span class=k>, </span><span class=t>PK </span><span class=k>extends </span>Serializable&gt; {</pre>
<pre class=ln style="left:451px;top:217.0px;width:20.200px;text-align:right;">12</pre>
<pre class=ln style="left:451px;top:239.0px;width:20.200px;text-align:right;">13</pre>
<pre style="left:522px;top:237.8px;">    <span class=fb>/unchecked/</span></pre>
<pre class=ln style="left:451px;top:261.0px;width:20.200px;text-align:right;">14</pre>
<pre style="left:522px;top:259.8px;">    <span class=k>private final </span>Class&lt;<span class=t>T</span>&gt; <span class=f>entityClass </span>=</pre>
<pre class=ln style="left:451px;top:283.0px;width:20.200px;text-align:right;">15</pre>
<pre style="left:522px;top:281.8px;">            (Class&lt;<span class=t>T</span>&gt;) ( (ParameterizedType) getClass().getGenericSuperclass()).getActualTypeArguments()[<span class=n>0</span>]<span class=k>;</span></pre>
<pre class=ln style="left:451px;top:305.0px;width:20.200px;text-align:right;">16</pre>
<pre class=ln style="left:451px;top:327.0px;width:20.200px;text-align:right;">17</pre>
<pre style="left:522px;top:325.8px;">    <span class=a>@PersistenceContext</span></pre>
<pre class=ln style="left:451px;top:349.0px;width:20.200px;text-align:right;">18</pre>
<pre style="left:522px;top:347.8px;">    <span class=k>private </span>EntityManager <span class=g>entityManager</span><span class=k>;</span></pre>
<pre class=ln style="left:451px;top:371.0px;width:20.200px;text-align:right;">19</pre>
<pre class=ln style="left:451px;top:393.0px;width:20.200px;text-align:right;">20</pre>
<pre style="left:522px;top:391.8px;">    <span class=k>protected </span>EntityManager <span class=m>getEntityManager</span>()<span class=fb> { </span><span class=k>return </span><span class=f>entityManager</span><span class=k>;</span><span class=fb> }</span></pre>
<pre class=ln style="left:451px;top:415.0px;width:20.200px;text-align:right;">23</pre>
<pre class=ln style="left:451px;top:437.0px;width:20.200px;text-align:right;">24</pre>
<pre style="left:522px;top:435.8px;">    <span class=k>public void </span><span class=m>save</span>(<span class=t>T </span>entity) {</pre>
<pre class=ln style="left:451px;top:459.0px;width:20.200px;text-align:right;">25</pre>
<pre class=ln style="left:451px;top:481.0px;width:20.200px;text-align:right;color:#a4a3a3;">26</pre>
<pre style="left:522px;top:479.8px;">        <span class=f>entityManager</span>.persist(entity)<span class=k>;</span></pre>
<pre class=ln style="left:451px;top:503.0px;width:20.200px;text-align:right;">27</pre>
<pre style="left:522px;top:501.8px;">    }</pre>
<pre class=ln style="left:451px;top:525.0px;width:20.200px;text-align:right;">28</pre>
<pre class=ln style="left:451px;top:547.0px;width:20.200px;text-align:right;">29</pre>
<pre style="left:522px;top:545.8px;">    <span class=k>public void </span><span class=m>update</span>(<span class=t>T </span>entity) {</pre>
<pre class=ln style="left:451px;top:569.0px;width:20.200px;text-align:right;">30</pre>
<pre class=ln style="left:451px;top:591.0px;width:20.200px;text-align:right;">31</pre>
<pre style="left:522px;top:589.8px;">        <span class=f>entityManager</span>.merge(entity)<span class=k>;</span></pre>
<pre class=ln style="left:451px;top:613.0px;width:20.200px;text-align:right;">32</pre>
<pre style="left:522px;top:611.8px;">    }</pre>
<pre class=ln style="left:451px;top:635.0px;width:20.200px;text-align:right;">33</pre>
<pre class=ln style="left:451px;top:657.0px;width:20.200px;text-align:right;">34</pre>
<pre style="left:522px;top:655.8px;">    <span class=k>public void </span><span class=m>delete</span>(<span class=t>PK </span>id) {</pre>
<pre class=ln style="left:451px;top:679.0px;width:20.200px;text-align:right;">35</pre>
<pre class=ln style="left:451px;top:701.0px;width:20.200px;text-align:right;">36</pre>
<pre style="left:522px;top:699.8px;">        <span class=f>entityManager</span>.remove(<span class=f>entityManager</span>.getReference(<span class=f>entityClass</span><span class=k>, </span>id))<span class=k>;</span></pre>
<pre class=ln style="left:451px;top:723.0px;width:20.200px;text-align:right;">37</pre>
<pre style="left:522px;top:721.8px;">    }</pre>
<pre class=ln style="left:451px;top:745.0px;width:20.200px;text-align:right;">38</pre>
<pre class=ln style="left:451px;top:767.0px;width:20.200px;text-align:right;">39</pre>
<pre style="left:522px;top:765.8px;">    <span class=k>public </span><span class=t>T </span><span class=m>findById</span>(<span class=t>PK </span>id) {</pre>
<pre class=ln style="left:451px;top:789.0px;width:20.200px;text-align:right;">40</pre>
<pre class=ln style="left:451px;top:811.0px;width:20.200px;text-align:right;">41</pre>
<pre style="left:522px;top:809.8px;">        <span class=k>return </span><span class=f>entityManager</span>.find(<span class=f>entityClass</span><span class=k>, </span>id)<span class=k>;</span></pre>
<pre class=ln style="left:451px;top:833.0px;width:20.200px;text-align:right;">42</pre>
<pre style="left:522px;top:831.8px;">    }</pre>
<pre class=ln style="left:451px;top:855.0px;width:20.200px;text-align:right;">43</pre>
<pre class=ln style="left:451px;top:877.0px;width:20.200px;text-align:right;">44</pre>
<pre style="left:522px;top:875.8px;">    <span class=k>public </span>List&lt;<span class=t>T</span>&gt; <span class=m>findAll</span>() {</pre>
<pre class=ln style="left:451px;top:899.0px;width:20.200px;text-align:right;">45</pre>
<pre class=ln style="left:451px;top:921.0px;width:20.200px;text-align:right;">46</pre>
<pre style="left:522px;top:919.8px;">        <span class=k>return </span><span class=f>entityManager</span></pre>
<pre class=ln style="left:451px;top:943.0px;width:20.200px;text-align:right;">47</pre>
<pre style="left:522px;top:941.8px;">                .createQuery(</pre>
<div style="left:758px;top:943.8px;width:51px;height:18px;border-radius:3px;background:#3b3b3b;"></div>
<span style="left:762px;top:944.80px;height:18px;line-height:18px;color:#787878;font-size:11.5px;letter-spacing:0.227px;">qlString:</span>
<pre style="left:813px;top:941.8px;"><span class=s>"from "</span> + <span class=f>entityClass</span>.getSimpleName()<span class=k>, </span><span class=f>entityClass</span>)</pre>
<div style="left:554px;top:281.8px;width:1px;height:22px;background:#393939;"></div>
<div style="left:554px;top:457.8px;width:1px;height:44px;background:#393939;"></div>
<div style="left:554px;top:567.8px;width:1px;height:44px;background:#393939;"></div>
<div style="left:554px;top:677.8px;width:1px;height:44px;background:#393939;"></div>
<div style="left:554px;top:787.8px;width:1px;height:44px;background:#393939;"></div>
<div style="left:554px;top:897.8px;width:1px;height:66px;background:#393939;"></div>
<svg style="left:482.5px;top:195.8px;" width="16" height="16"><use href="#gimpl"/></svg>
<svg style="left:480px;top:437.40000000000003px;" width="14" height="16"><use href="#gover"/></svg>
<svg style="left:511px;top:441.8px;" width="9" height="10"><use href="#fstart"/></svg>
<svg style="left:480px;top:547.4px;" width="14" height="16"><use href="#gover"/></svg>
<svg style="left:511px;top:551.8px;" width="9" height="10"><use href="#fstart"/></svg>
<svg style="left:480px;top:657.4px;" width="14" height="16"><use href="#gover"/></svg>
<svg style="left:511px;top:661.8px;" width="9" height="10"><use href="#fstart"/></svg>
<svg style="left:480px;top:767.4px;" width="14" height="16"><use href="#gover"/></svg>
<svg style="left:511px;top:771.8px;" width="9" height="10"><use href="#fstart"/></svg>
<svg style="left:480px;top:877.4px;" width="14" height="16"><use href="#gover"/></svg>
<svg style="left:511px;top:881.8px;" width="9" height="10"><use href="#fstart"/></svg>
<svg style="left:511px;top:505.8px;" width="9" height="10"><use href="#fend"/></svg>
<svg style="left:511px;top:615.8px;" width="9" height="10"><use href="#fend"/></svg>
<svg style="left:511px;top:725.8px;" width="9" height="10"><use href="#fend"/></svg>
<svg style="left:511px;top:835.8px;" width="9" height="10"><use href="#fend"/></svg>
<svg style="left:511px;top:155.8px;" width="9" height="9"><use href="#fplus"/></svg>
<svg style="left:511px;top:397.8px;" width="9" height="9"><use href="#fplus"/></svg>
<svg style="left:1315px;top:115px;" width="15" height="13"><use href="#warn"/></svg>
<span style="left:1334px;top:111.00px;height:24px;line-height:24px;color:#b4b4b4;font-size:13px;">1</span>
<svg style="left:1354px;top:118px;" width="11" height="7"><use href="#cup"/></svg>
<svg style="left:1381px;top:119px;" width="11" height="7"><use href="#cdn"/></svg>
<div style="left:1390px;top:141px;width:11.5px;height:543px;background:#595959;"></div>
<div style="left:1384px;top:294.5px;width:18px;height:3px;background:#c9a227;"></div>
<div style="left:522px;top:944px;width:825px;height:12px;background:rgba(128,128,128,0.62);"></div>
<div style="left:451px;top:957px;width:952px;height:27px;background:#3c3f41;"></div>
<span style="left:1410px;top:77.00px;height:24px;line-height:24px;color:#b4b4b4;letter-spacing:0.117px;">Maven</span>
<svg style="left:1594px;top:80px;" width="16" height="16"><use href="#gear"/></svg>
<svg style="left:1628px;top:86px;" width="15" height="4"><use href="#minus"/></svg>
<svg style="left:1415px;top:115px;" width="16" height="16"><use href="#mreimp"/></svg>
<svg style="left:1448px;top:115px;" width="20" height="18"><use href="#mgen"/></svg>
<svg style="left:1483px;top:115px;" width="19" height="18"><use href="#mdown"/></svg>
<div style="left:1513px;top:112px;width:1px;height:24px;background:#4b4e50;"></div>
<svg style="left:1529px;top:117px;" width="12" height="12"><use href="#plus"/></svg>
<div style="left:1556px;top:112px;width:1px;height:24px;background:#4b4e50;"></div>
<svg style="left:1574px;top:114.5px;" width="13" height="16"><use href="#run"/></svg>
<span style="left:1603px;top:111.00px;height:24px;line-height:24px;color:#bfc1c3;font-size:22px;-webkit-text-stroke:0.700px #bfc1c3;"><i><b>m</b></i></span>
<svg style="left:1637px;top:119.5px;" width="10" height="7"><use href="#more"/></svg>
<svg style="left:1409.1px;top:147.1px;" width="14" height="14"><use href="#chr"/></svg>
<svg style="left:1435px;top:144.5px;" width="20" height="20"><use href="#mprof"/></svg>
<span style="left:1458px;top:143.50px;height:24px;line-height:24px;color:#b4b4b4;letter-spacing:-0.145px;">Profiles</span>
<svg style="left:1410px;top:171.9px;" width="14" height="14"><use href="#chd"/></svg>
<svg style="left:1435px;top:169.5px;" width="20" height="20"><use href="#mproj"/></svg>
<span style="left:1458px;top:168.50px;height:24px;line-height:24px;color:#b4b4b4;letter-spacing:0.426px;">demo-mvc</span>
<svg style="left:1432.1px;top:197.1px;" width="14" height="14"><use href="#chr"/></svg>
<svg style="left:1458px;top:194.5px;" width="20" height="20"><use href="#mphase"/></svg>
<span style="left:1481px;top:193.50px;height:24px;line-height:24px;color:#b4b4b4;letter-spacing:-0.379px;">Lifecycle</span>
<svg style="left:1433px;top:221.9px;" width="14" height="14"><use href="#chd"/></svg>
<svg style="left:1458px;top:219.5px;" width="20" height="20"><use href="#mphase"/></svg>
<span style="left:1481px;top:218.50px;height:24px;line-height:24px;color:#b4b4b4;letter-spacing:-0.047px;">Plugins</span>
<svg style="left:1455.1px;top:247.1px;" width="14" height="14"><use href="#chr"/></svg>
<svg style="left:1481px;top:244.5px;" width="20" height="20"><use href="#mplug"/></svg>
<span style="left:1504px;top:243.50px;height:24px;line-height:24px;color:#b4b4b4;letter-spacing:-0.570px;">clean</span>
<span style="left:1535.5px;top:243.50px;height:24px;line-height:24px;color:#838383;letter-spacing:-0.220px;"> (org.apache.maven.plugins:maven-clean-plugin</span>
<svg style="left:1455.1px;top:272.1px;" width="14" height="14"><use href="#chr"/></svg>
<svg style="left:1481px;top:269.5px;" width="20" height="20"><use href="#mplug"/></svg>
<span style="left:1504px;top:268.50px;height:24px;line-height:24px;color:#b4b4b4;letter-spacing:0.069px;">compiler</span>
<span style="left:1557.0px;top:268.50px;height:24px;line-height:24px;color:#838383;letter-spacing:-0.220px;"> (org.apache.maven.plugins</span>
<svg style="left:1455.1px;top:297.1px;" width="14" height="14"><use href="#chr"/></svg>
<svg style="left:1481px;top:294.5px;" width="20" height="20"><use href="#mplug"/></svg>
<span style="left:1504px;top:293.50px;height:24px;line-height:24px;color:#b4b4b4;letter-spacing:0.141px;">deploy</span>
<span style="left:1546.0px;top:293.50px;height:24px;line-height:24px;color:#838383;letter-spacing:-0.220px;"> (org.apache.maven.plugins</span>
<svg style="left:1455.1px;top:322.1px;" width="14" height="14"><use href="#chr"/></svg>
<svg style="left:1481px;top:319.5px;" width="20" height="20"><use href="#mplug"/></svg>
<span style="left:1504px;top:318.50px;height:24px;line-height:24px;color:#b4b4b4;letter-spacing:0.081px;">install</span>
<span style="left:1540.5px;top:318.50px;height:24px;line-height:24px;color:#838383;letter-spacing:-0.220px;"> (org.apache.maven.plugins</span>
<svg style="left:1455.1px;top:347.1px;" width="14" height="14"><use href="#chr"/></svg>
<svg style="left:1481px;top:344.5px;" width="20" height="20"><use href="#mplug"/></svg>
<span style="left:1504px;top:343.50px;height:24px;line-height:24px;color:#b4b4b4;letter-spacing:-0.008px;">jar</span>
<span style="left:1520.5px;top:343.50px;height:24px;line-height:24px;color:#838383;letter-spacing:-0.220px;"> (org.apache.maven.plugins</span>
<svg style="left:1455.1px;top:372.1px;" width="14" height="14"><use href="#chr"/></svg>
<svg style="left:1481px;top:369.5px;" width="20" height="20"><use href="#mplug"/></svg>
<span style="left:1504px;top:368.50px;height:24px;line-height:24px;color:#b4b4b4;letter-spacing:-0.223px;">resources</span>
<span style="left:1563.0px;top:368.50px;height:24px;line-height:24px;color:#838383;letter-spacing:-0.220px;"> (org.apache.maven.plugins</span>
<svg style="left:1455.1px;top:397.1px;" width="14" height="14"><use href="#chr"/></svg>
<svg style="left:1481px;top:394.5px;" width="20" height="20"><use href="#mplug"/></svg>
<span style="left:1504px;top:393.50px;height:24px;line-height:24px;color:#b4b4b4;letter-spacing:-0.005px;">site</span>
<span style="left:1526.5px;top:393.50px;height:24px;line-height:24px;color:#838383;letter-spacing:-0.220px;"> (org.apache.maven.plugins</span>
<svg style="left:1456px;top:421.9px;" width="14" height="14"><use href="#chd"/></svg>
<svg style="left:1481px;top:419.5px;" width="20" height="20"><use href="#mplug"/></svg>
<span style="left:1504px;top:418.50px;height:24px;line-height:24px;color:#b4b4b4;letter-spacing:0.545px;">spring-boot</span>
<span style="left:1578.5px;top:418.50px;height:24px;line-height:24px;color:#838383;letter-spacing:-0.220px;"> (org.springframework.boot</span>
<svg style="left:1504px;top:444.5px;" width="20" height="20"><use href="#mgoal"/></svg>
<span style="left:1527px;top:443.50px;height:24px;line-height:24px;color:#b4b4b4;letter-spacing:0.377px;">spring-boot:build-info</span>
<svg style="left:1504px;top:469.5px;" width="20" height="20"><use href="#mgoal"/></svg>
<span style="left:1527px;top:468.50px;height:24px;line-height:24px;color:#b4b4b4;letter-spacing:0.345px;">spring-boot:help</span>
<svg style="left:1504px;top:494.5px;" width="20" height="20"><use href="#mgoal"/></svg>
<span style="left:1527px;top:493.50px;height:24px;line-height:24px;color:#b4b4b4;letter-spacing:0.083px;">spring-boot:repackage</span>
<svg style="left:1504px;top:519.5px;--bg:#4b6eaf;" width="20" height="20"><use href="#mgoal"/></svg>
<span style="left:1527px;top:518.50px;height:24px;line-height:24px;color:#b4b4b4;letter-spacing:0.442px;">spring-boot:run</span>
<svg style="left:1504px;top:544.5px;" width="20" height="20"><use href="#mgoal"/></svg>
<span style="left:1527px;top:543.50px;height:24px;line-height:24px;color:#b4b4b4;letter-spacing:0.403px;">spring-boot:start</span>
<svg style="left:1504px;top:569.5px;" width="20" height="20"><use href="#mgoal"/></svg>
<span style="left:1527px;top:568.50px;height:24px;line-height:24px;color:#b4b4b4;letter-spacing:0.412px;">spring-boot:stop</span>
<svg style="left:1455.1px;top:597.1px;" width="14" height="14"><use href="#chr"/></svg>
<svg style="left:1481px;top:594.5px;" width="20" height="20"><use href="#mplug"/></svg>
<span style="left:1504px;top:593.50px;height:24px;line-height:24px;color:#b4b4b4;letter-spacing:-0.002px;">surefire</span>
<span style="left:1550.5px;top:593.50px;height:24px;line-height:24px;color:#838383;letter-spacing:-0.220px;"> (org.apache.maven.plugins</span>
<svg style="left:1432.1px;top:622.1px;" width="14" height="14"><use href="#chr"/></svg>
<svg style="left:1459px;top:621px;" width="17" height="17"><use href="#gear"/></svg>
<span style="left:1481px;top:618.50px;height:24px;line-height:24px;color:#b4b4b4;letter-spacing:0.142px;">Run Configurations</span>
<svg style="left:1432.1px;top:647.1px;" width="14" height="14"><use href="#chr"/></svg>
<svg style="left:1458px;top:644.5px;" width="20" height="20"><use href="#mdeps"/></svg>
<span style="left:1481px;top:643.50px;height:24px;line-height:24px;color:#b4b4b4;letter-spacing:-0.121px;">Dependencies</span>
<div style="left:1653px;top:142px;width:1px;height:815px;background:#323232;"></div>
<div style="left:1654px;top:153px;width:24px;height:804px;background:#3c3f41;"></div>
<div style="left:1404px;top:944px;width:101px;height:12px;background:#5f6162;"></div>
<svg style="left:44px;top:964px;" width="11" height="15"><use href="#vcs"/></svg>
<span style="left:62.5px;top:960.50px;height:24px;line-height:24px;color:#b4b4b4;letter-spacing:-0.129px;">Version Control</span>
<svg style="left:180px;top:965px;" width="13" height="11"><use href="#todo"/></svg>
<span style="left:198.5px;top:960.50px;height:24px;line-height:24px;color:#b4b4b4;letter-spacing:-1.200px;">TODO</span>
<svg style="left:261px;top:964px;" width="13" height="13"><use href="#probs"/></svg>
<span style="left:278.5px;top:960.50px;height:24px;line-height:24px;color:#b4b4b4;letter-spacing:-0.219px;">Problems</span>
<svg style="left:358.5px;top:964px;" width="14.5" height="13"><use href="#term"/></svg>
<span style="left:378px;top:960.50px;height:24px;line-height:24px;color:#b4b4b4;letter-spacing:-0.145px;">Terminal</span>
<svg style="left:451.5px;top:963px;" width="15.5" height="15.5"><use href="#bhammer"/></svg>
<span style="left:471.5px;top:960.50px;height:24px;line-height:24px;color:#b4b4b4;letter-spacing:-0.383px;">Build</span>
<svg style="left:526px;top:963.5px;" width="16" height="16"><use href="#deps"/></svg>
<span style="left:546px;top:960.50px;height:24px;line-height:24px;color:#b4b4b4;letter-spacing:-0.439px;">Dependencies</span>
<svg style="left:1564px;top:963px;" width="16" height="16"><use href="#evlog"/></svg>
<span style="left:1584px;top:960.50px;height:24px;line-height:24px;color:#b4b4b4;letter-spacing:-0.475px;">Event Log</span>
<svg style="left:7px;top:990px;" width="16" height="16"><use href="#sq"/></svg>
<span style="left:33px;top:987.30px;height:24px;line-height:24px;color:#b4b4b4;letter-spacing:0.083px;">IntelliJ IDEA 2022.1 available // Update... (3 minutes ago)</span>
<svg style="left:1154px;top:988px;" width="15" height="17"><use href="#tabn"/></svg>
<span style="left:1175px;top:985.00px;height:24px;line-height:24px;color:#c8c8c8;font-size:17px;letter-spacing:0.870px;">tabnine</span>
<span style="left:1255px;top:987.30px;height:24px;line-height:24px;color:#c842d8;letter-spacing:0.091px;">Partial support, click to resolve</span>
<span style="left:1457px;top:987.30px;height:24px;line-height:24px;color:#b4b4b4;letter-spacing:0.301px;">26:39</span>
<span style="left:1508px;top:987.30px;height:24px;line-height:24px;color:#b4b4b4;letter-spacing:-1.200px;">CRLF</span>
<span style="left:1555.5px;top:987.30px;height:24px;line-height:24px;color:#b4b4b4;letter-spacing:-0.188px;">UTF-8</span>
<span style="left:1609.5px;top:987.30px;height:24px;line-height:24px;color:#b4b4b4;letter-spacing:0.156px;">Tab*</span>
<svg style="left:1651px;top:990px;" width="15" height="15"><use href="#lock"/></svg>
</div>
</body></html>
